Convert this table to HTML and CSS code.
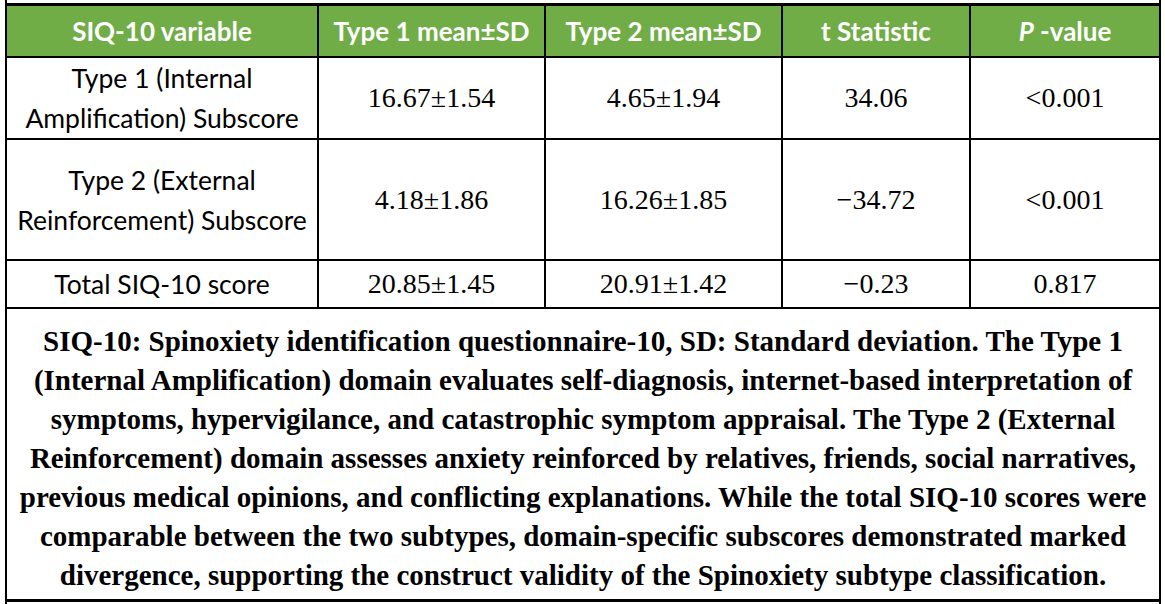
FILE: index.html
```html
<!DOCTYPE html>
<html lang="en">
<head>
<meta charset="utf-8">
<title>SIQ-10 subscores</title>
<link rel="stylesheet" href="styles.css">
</head>
<body>
<div class="frame">
  <table class="siq">
    <colgroup>
      <col class="c1"><col class="c2"><col class="c3"><col class="c4"><col class="c5">
    </colgroup>
    <thead>
      <tr class="head">
        <th>SIQ-10 variable</th>
        <th>Type 1 mean±SD</th>
        <th>Type 2 mean±SD</th>
        <th>t Statistic</th>
        <th><i>P</i> -value</th>
      </tr>
    </thead>
    <tbody>
      <tr class="r1">
        <td class="var">Type 1 (Internal<br>Amplification) Subscore</td>
        <td class="num">16.67±1.54</td>
        <td class="num">4.65±1.94</td>
        <td class="num">34.06</td>
        <td class="num">&lt;0.001</td>
      </tr>
      <tr class="r2">
        <td class="var">Type 2 (External<br>Reinforcement) Subscore</td>
        <td class="num">4.18±1.86</td>
        <td class="num">16.26±1.85</td>
        <td class="num">−34.72</td>
        <td class="num">&lt;0.001</td>
      </tr>
      <tr class="r3">
        <td class="var">Total SIQ-10 score</td>
        <td class="num">20.85±1.45</td>
        <td class="num">20.91±1.42</td>
        <td class="num">−0.23</td>
        <td class="num">0.817</td>
      </tr>
      <tr class="foot">
        <td colspan="5">SIQ-10: Spinoxiety identification questionnaire-10, SD: Standard deviation. The Type 1<br>(Internal Amplification) domain evaluates self-diagnosis, internet-based interpretation of<br>symptoms, hypervigilance, and catastrophic symptom appraisal. The Type 2 (External<br>Reinforcement) domain assesses anxiety reinforced by relatives, friends, social narratives,<br>previous medical opinions, and conflicting explanations. While the total SIQ-10 scores were<br>comparable between the two subtypes, domain-specific subscores demonstrated marked<br>divergence, supporting the construct validity of the Spinoxiety subtype classification.</td>
      </tr>
    </tbody>
  </table>
</div>
</body>
</html>
```
FILE: styles.css
```css
html, body {
  margin: 0;
  padding: 0;
  background: #ffffff;
}

.frame {
  box-sizing: border-box;
  margin-left: 5px;
  width: 1156px;
  height: 604px;
  padding-top: 3px;
  border-left: 2px solid #000;
  border-right: 2px solid #000;
}

.siq {
  width: 1152px;
  border-collapse: collapse;
  table-layout: fixed;
  border-top: 3px solid #000;
  border-bottom: 3px solid #000;
}

.c1 { width: 311px; }
.c2 { width: 227px; }
.c3 { width: 237px; }
.c4 { width: 188px; }
.c5 { width: 189px; }

.siq th,
.siq td {
  border: 2px solid #000;
  padding: 0;
  text-align: center;
  vertical-align: middle;
}

.siq th:first-child,
.siq td:first-child {
  border-left: none;
}

.siq th:last-child,
.siq td:last-child {
  border-right: none;
}

.head th {
  background: #70ad47;
  color: #ffffff;
  font-family: Lato, "Open Sans", sans-serif;
  font-weight: 700;
  font-size: 26px;
  height: 50px;
  white-space: nowrap;
}

.head th i {
  font-style: italic;
}

.var {
  font-family: Lato, "Open Sans", sans-serif;
  font-size: 26.5px;
  line-height: 40px;
  color: #000;
}

.num {
  font-family: "Liberation Serif", "Times New Roman", serif;
  font-size: 28px;
  color: #000;
}

.r1 td { height: 80px; }
.r2 td { height: 119px; }
.r3 td { height: 46px; }

.foot td {
  box-sizing: border-box;
  height: 292px;
  padding-top: 10px;
  font-family: "Liberation Serif", "Times New Roman", serif;
  font-weight: 700;
  font-size: 29px;
  line-height: 39px;
  color: #000;
  white-space: nowrap;
}
```
